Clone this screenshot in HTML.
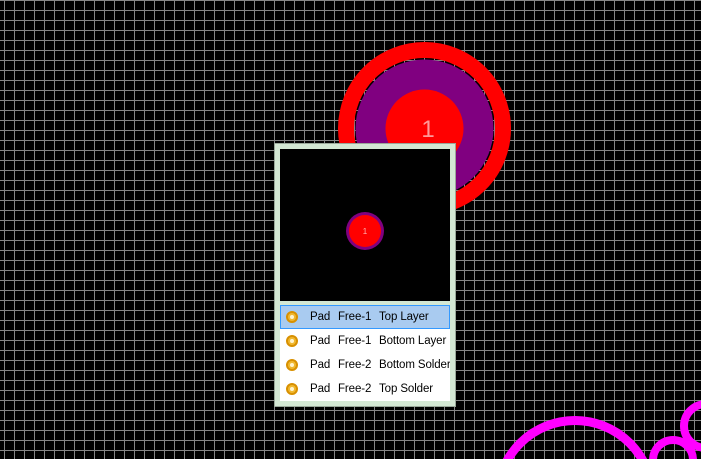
<!DOCTYPE html>
<html><head><style>
html,body{margin:0;width:701px;height:459px;overflow:hidden}
body{background:#000;position:relative;font-family:"Liberation Sans",Tahoma,sans-serif}
#grid{position:absolute;left:0;top:0;width:701px;height:459px;
background-image:linear-gradient(to right,#858585 1px,transparent 1px),linear-gradient(to bottom,#858585 1px,transparent 1px);
background-size:10px 10px;background-position:4px 0px}
svg{position:absolute;left:0;top:0;display:block}
#pop{position:absolute;left:275px;top:144px;width:170px;height:252px;border:5px solid #d4e8d4;background:#d4e8d4;outline:1px solid #9aa89a}
#prev{position:absolute;left:0;top:0;width:170px;height:152px;background:#000;overflow:hidden}
#list{position:absolute;left:0;top:156px;width:170px;height:96px;background:#fff;overflow:hidden}
.row{position:absolute;left:0;width:170px;height:24px;font-size:11.5px;letter-spacing:-0.1px;line-height:24px;color:#000;white-space:nowrap}
.row.sel{background:#a9cbf0;box-sizing:border-box;border:1px solid #3399ff}
.row span{position:absolute;top:0;white-space:nowrap}
.ic{position:absolute;left:6px;top:6px;width:8px;height:8px;border-radius:50%;border:2px solid #d89000;background:#f0b830}
.ic:after{content:"";position:absolute;left:2px;top:2px;width:4px;height:4px;border-radius:50%;background:#fff4d0}
</style></head><body>
<div id="grid"></div>
<svg width="701" height="459">
<circle cx="424.5" cy="128.5" r="78.5" fill="none" stroke="#ff0000" stroke-width="16"/>
<circle cx="424.5" cy="128.5" r="69" fill="#800080"/>
<circle cx="424.5" cy="128.5" r="39" fill="#ff0000"/>
<text x="428" y="137" font-size="24" fill="#ff9a9a" text-anchor="middle" font-family="Liberation Sans">1</text>
<circle cx="575" cy="498" r="77.5" fill="none" stroke="#ff00ff" stroke-width="9"/>
<circle cx="673" cy="460" r="20" fill="none" stroke="#ff00ff" stroke-width="8"/>
<circle cx="706" cy="426" r="22" fill="none" stroke="#ff00ff" stroke-width="8"/>
</svg>
<div id="pop">
<div id="prev"><svg width="170" height="152"><circle cx="85" cy="82" r="19" fill="#800080"/><circle cx="85" cy="82" r="16" fill="#ff0000"/><text x="85" y="85" font-size="8" fill="#ffb0b0" text-anchor="middle">1</text></svg></div>
<div id="list">
<div class="row sel" style="top:0"><div class="ic" style="top:5px;left:5px"></div><span style="left:29px;top:-1px">Pad</span><span style="left:57px;top:-1px">Free-1</span><span style="left:98px;top:-1px">Top Layer</span></div>
<div class="row" style="top:24px"><div class="ic"></div><span style="left:30px">Pad</span><span style="left:58px">Free-1</span><span style="left:99px">Bottom Layer</span></div>
<div class="row" style="top:48px"><div class="ic"></div><span style="left:30px">Pad</span><span style="left:58px">Free-2</span><span style="left:99px">Bottom Solder</span></div>
<div class="row" style="top:72px"><div class="ic"></div><span style="left:30px">Pad</span><span style="left:58px">Free-2</span><span style="left:99px">Top Solder</span></div>
</div>
</div>
</body></html>
